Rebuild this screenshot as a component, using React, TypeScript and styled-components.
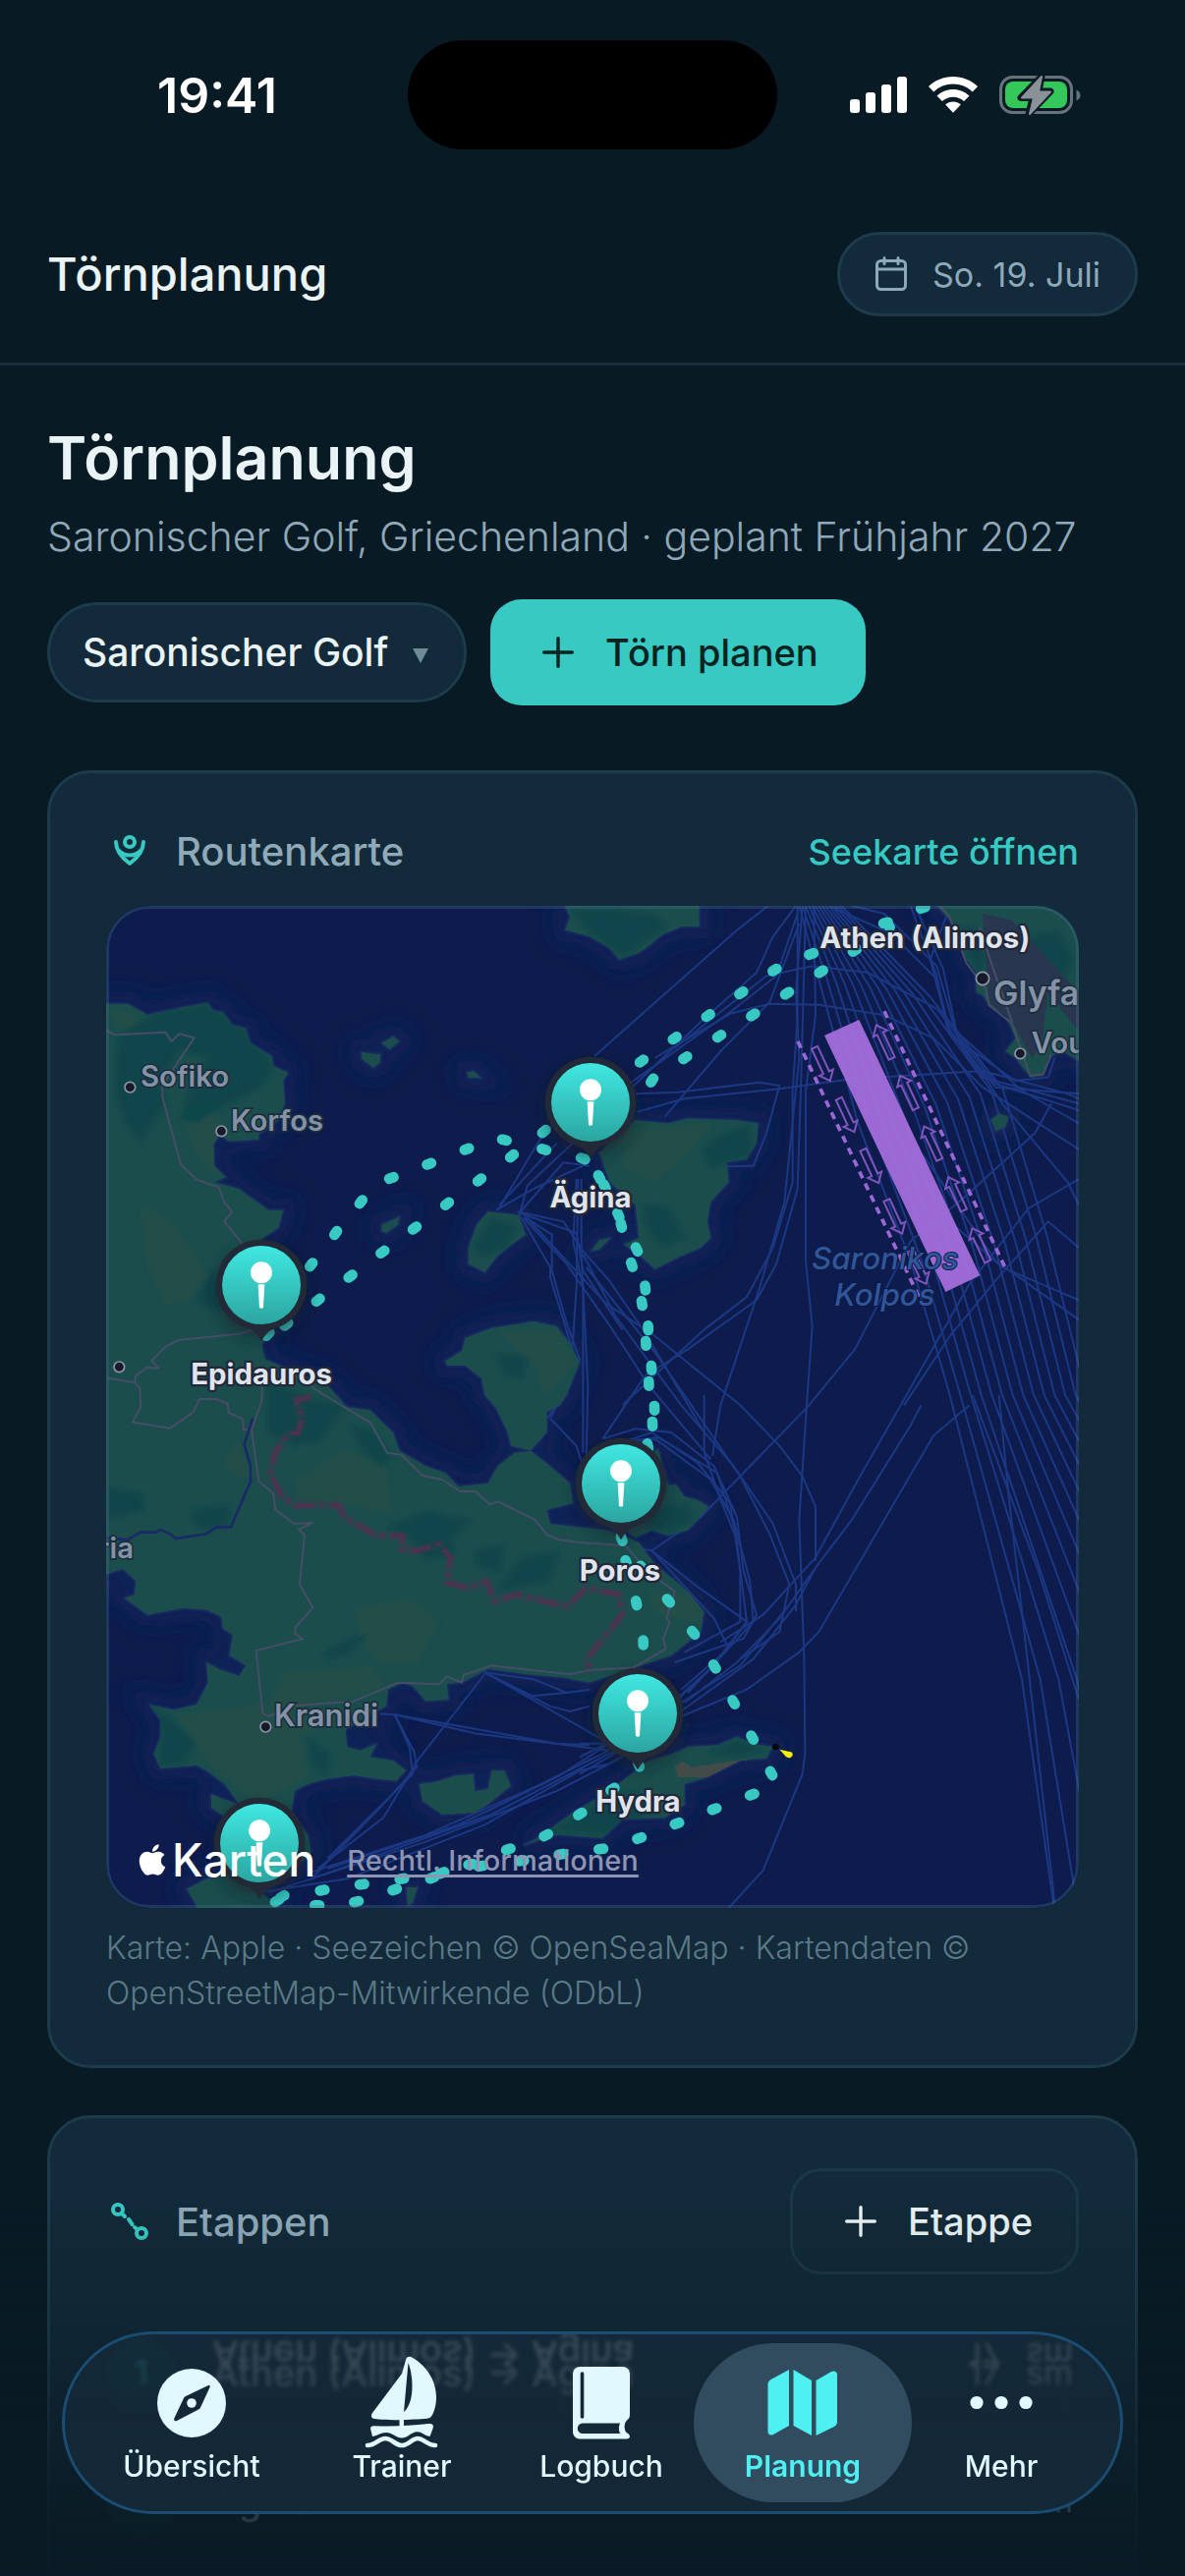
import React from "react";
import styled, { createGlobalStyle, css } from "styled-components";
import { FaApple } from "react-icons/fa";

const color = {
  page: "#081a24",
  card: "#122a39",
  line: "#1e3b4b",
  text: "#eaf3f5",
  muted: "#8fa9b9",
  faint: "#5c7988",
  teal: "#38c9c3",
  tab: "#e0f8ff",
  tabActive: "#4ef0f2",
};

const Global = createGlobalStyle`
  *, *::before, *::after { box-sizing: border-box; }
  body {
    margin: 0;
    background: ${color.page};
    color: ${color.text};
    font-family: Inter, "Noto Sans", sans-serif;
    -webkit-font-smoothing: antialiased;
  }
  button, select { font-family: inherit; margin: 0; }
`;

const Screen = styled.div`
  height: 100vh;
  overflow: hidden;
  display: flex;
  flex-direction: column;
`;

/* ---------- status bar ---------- */

const StatusBar = styled.div`
  flex: none;
  height: 186px;
  padding: 41px 106px 0;
  display: grid;
  grid-template-columns: 1fr 376px 1fr;
  align-items: start;
`;
const Clock = styled.time`
  padding-left: 54px;
  font-size: 50px;
  font-weight: 600;
  line-height: 112px;
  color: #fff;
`;
const Island = styled.div`
  height: 111px;
  border-radius: 56px;
  background: #000;
`;
const StatusIcons = styled.div`
  display: flex;
  justify-content: flex-end;
  align-items: center;
  gap: 22px;
  height: 112px;
  svg { display: block; }
`;

/* ---------- header ---------- */

const Header = styled.header`
  flex: none;
  display: flex;
  align-items: center;
  justify-content: space-between;
  padding: 50px 48px 47px;
  border-bottom: 3px solid #182d39;
`;
const HeaderTitle = styled.span`
  font-size: 47px;
  font-weight: 500;
  line-height: 60px;
`;
const DateChip = styled.button`
  display: flex;
  align-items: center;
  gap: 26px;
  height: 86px;
  padding: 0 35px 0 36px;
  border: 3px solid ${color.line};
  border-radius: 43px;
  background: ${color.card};
  color: ${color.muted};
  font-size: 34px;
  font-weight: 400;
`;

/* ---------- page ---------- */

const Main = styled.main`
  flex: 1;
  min-height: 0;
  overflow-y: auto;
  scrollbar-width: none;
  padding: 54px 48px 200px;
`;
const Title = styled.h1`
  margin: 0;
  font-size: 61px;
  font-weight: 600;
  line-height: 80px;
`;
const Subtitle = styled.p`
  margin: 12px 0 0;
  font-size: 41px;
  font-weight: 300;
  line-height: 56px;
  color: ${color.muted};
`;
const Actions = styled.div`
  display: flex;
  align-items: center;
  gap: 24px;
  margin-top: 36px;
`;
const SelectPill = styled.label`
  display: flex;
  align-items: center;
  gap: 24px;
  height: 102px;
  padding: 0 36px 0 33px;
  border: 3px solid ${color.line};
  border-radius: 51px;
  background: ${color.card};
`;
const RegionSelect = styled.select`
  appearance: none;
  padding: 0;
  border: 0;
  outline: 0;
  background: transparent;
  color: ${color.text};
  font-size: 39px;
  font-weight: 500;
  line-height: 50px;
`;
const Caret = styled.span`
  width: 0;
  height: 0;
  margin-top: 6px;
  border: 8px solid transparent;
  border-top: 15px solid #708b98;
  border-bottom: 0;
`;
const ActionButton = styled.button<{ $primary?: boolean }>`
  display: flex;
  align-items: center;
  gap: 32px;
  height: 108px;
  border-radius: 32px;
  font-size: 38px;
  font-weight: 500;
  ${(p) =>
    p.$primary
      ? css`
          padding: 0 48px 0 53px;
          border: 0;
          background: ${color.teal};
          color: #06231f;
        `
      : css`
          padding: 0 44px 0 53px;
          border: 3px solid #1c3846;
          background: transparent;
          color: ${color.text};
        `}
`;

const Card = styled.section<{ $gap: number }>`
  margin-top: ${(p) => p.$gap}px;
  padding: 51px 57px 50px;
  border: 3px solid ${color.line};
  border-radius: 44px;
  background: ${color.card};
`;
const CardHeader = styled.div<{ $tall?: boolean }>`
  display: flex;
  align-items: center;
  justify-content: space-between;
  min-height: ${(p) => (p.$tall ? 108 : 51)}px;
  margin: ${(p) => (p.$tall ? "0 0 36px" : "3px 0 30px")};
`;
const CardTitle = styled.h2`
  display: flex;
  align-items: center;
  gap: 23px;
  margin: 0;
  font-size: 40px;
  font-weight: 500;
  line-height: 51px;
  color: ${color.muted};
`;
const CardLink = styled.a`
  color: ${color.teal};
  font-size: 36px;
  font-weight: 500;
  text-decoration: none;
`;

const MapFrame = styled.div`
  position: relative;
  aspect-ratio: 33 / 34;
  border-radius: 44px;
  overflow: hidden;
  background: #0d1c4e;
  &::after {
    content: "";
    position: absolute;
    inset: 0;
    border: 3px solid rgba(75, 120, 150, 0.3);
    border-radius: inherit;
    pointer-events: none;
  }
  > svg { display: block; width: 100%; height: 100%; }
`;
const MapCredit = styled.div`
  position: absolute;
  left: 30px;
  bottom: 21px;
  display: flex;
  align-items: center;
  gap: 32px;
`;
const MapBrand = styled.span`
  display: flex;
  align-items: center;
  gap: 3px;
  color: #fff;
  font-size: 46px;
  font-weight: 500;
  line-height: 56px;
  svg { width: 34px; height: 36px; }
`;
const LegalLink = styled.a`
  color: #8d95b2;
  font-size: 29px;
  font-weight: 500;
  text-decoration: underline;
  text-decoration-thickness: 3px;
  text-underline-offset: 4px;
`;
const Caption = styled.p`
  margin: 18px 0 0;
  font-size: 32px;
  font-weight: 300;
  line-height: 46px;
  color: ${color.faint};
`;

const LegList = styled.ol`
  margin: 0;
  padding: 0;
  list-style: none;
`;
const Leg = styled.li`
  display: flex;
  align-items: center;
  gap: 36px;
  height: 130px;
  border-bottom: 3px solid ${color.line};
`;
const LegNumber = styled.span`
  display: grid;
  place-items: center;
  width: 72px;
  height: 72px;
  border-radius: 50%;
  background: #0f3e46;
  color: ${color.teal};
  font-size: 34px;
  font-weight: 600;
`;
const LegName = styled.span<{ $mirrored?: boolean }>`
  flex: 1;
  font-size: 38px;
  line-height: 40px;
  font-weight: 500;
  ${(p) => p.$mirrored && css`-webkit-box-reflect: above -22px;`}
`;
const LegDistance = styled.span<{ $mirrored?: boolean }>`
  display: flex;
  gap: 26px;
  padding-right: 6px;
  font-size: 34px;
  line-height: 40px;
  ${(p) => p.$mirrored && css`-webkit-box-reflect: above -22px;`}
`;

/* ---------- tab bar ---------- */

const Fade = styled.div`
  position: fixed;
  inset: auto 0 0;
  height: 380px;
  pointer-events: none;
  background: linear-gradient(
    rgba(10, 25, 35, 0) 0%,
    rgba(10, 25, 35, 0.18) 30%,
    rgba(10, 25, 35, 0.45) 50%,
    rgba(10, 26, 35, 0.86) 82%,
    rgba(10, 26, 37, 0.93) 100%
  );
`;
const TabBar = styled.nav`
  position: fixed;
  inset: auto 63px 63px;
  height: 186px;
  display: grid;
  grid-template-columns: 240fr 188fr 218fr 192fr 212fr;
  padding: 9px 15px 9px 9px;
  border: 3px solid #1b4c72;
  border-radius: 93px;
  background: linear-gradient(rgba(21, 42, 58, 0.76) 45%, rgba(20, 41, 56, 0.98) 65%);
  backdrop-filter: blur(2px);
`;
const Tab = styled.button<{ $active?: boolean }>`
  display: flex;
  flex-direction: column;
  align-items: center;
  justify-content: flex-start;
  height: 162px;
  margin: 0 ${(p) => (p.$active ? -15 : 0)}px;
  padding: 11px 0 0;
  border: 0;
  border-radius: 81px;
  background: ${(p) => (p.$active ? "#324c5f" : "transparent")};
  color: ${(p) => (p.$active ? color.tabActive : color.tab)};
  font-size: 30px;
  font-weight: ${(p) => (p.$active ? 600 : 500)};
  line-height: 36px;
  svg { display: block; width: 96px; height: 96px; }
`;

/* ---------- icons ---------- */

const PlusIcon = () => (
  <svg width="32" height="32" viewBox="0 0 32 32" fill="none" stroke="currentColor" strokeWidth="3.4" strokeLinecap="round">
    <path d="M16 1.7v28.6M1.7 16h28.6" />
  </svg>
);

const CalendarIcon = () => (
  <svg width="32" height="36" viewBox="0 0 32 36" fill="none" stroke="currentColor" strokeWidth="3" strokeLinecap="round">
    <rect x="1.5" y="4.5" width="29" height="29" rx="4" />
    <path d="M1.5 13h29M9 1.5v6M23 1.5v6" />
  </svg>
);

const RoutePinIcon = () => (
  <svg width="48" height="48" viewBox="0 0 48 48" fill="none" stroke={color.teal} strokeWidth="4" strokeLinecap="round" strokeLinejoin="round">
    <circle cx="24" cy="14" r="5" />
    <path d="M10 14c0 9 6 16 14 22 8-6 14-13 14-22" />
    <path d="M13 23c6 6 16 6 22 0" />
  </svg>
);

const LegsIcon = () => (
  <svg width="48" height="48" viewBox="0 0 48 48" fill="none" stroke={color.teal} strokeWidth="4" strokeLinecap="round">
    <circle cx="12" cy="12" r="5" />
    <circle cx="36" cy="36" r="5" />
    <path d="M16 16l3 3M23 22l3.500 5M29 30l3 2.500" />
  </svg>
);

const SignalIcon = () => (
  <svg width="58" height="38" viewBox="0 0 58 38" fill="#fff">
    <rect x="0" y="23" width="10" height="14" rx="3" />
    <rect x="16" y="16" width="10" height="21" rx="3" />
    <rect x="32" y="8" width="10" height="29" rx="3" />
    <rect x="48" y="0" width="10" height="37" rx="3" />
  </svg>
);

const WifiIcon = () => (
  <svg width="50" height="38" viewBox="0 0 50 38" fill="#fff">
    <path d="M25 0C15.300 0 6.500 3.800 0 10l5.300 5.500C10.400 10.600 17.400 7.600 25 7.600s14.600 3 19.700 7.900L50 10C43.500 3.800 34.700 0 25 0z" />
    <path d="M25 13c-6.400 0-12.200 2.500-16.500 6.600l5.400 5.500c2.900-2.700 6.800-4.400 11.100-4.400s8.200 1.700 11.100 4.400l5.400-5.500C37.200 15.500 31.400 13 25 13z" />
    <path d="M25 25.500c-3 0-5.800 1.200-7.800 3L25 36.800l7.800-8.300c-2-1.800-4.800-3-7.800-3z" />
  </svg>
);

const BatteryIcon = () => (
  <svg width="83" height="42" viewBox="0 0 83 42">
    <rect x="1.500" y="2.500" width="72" height="36" rx="12" fill="none" stroke="#67737a" strokeWidth="3" />
    <rect x="6" y="7" width="63" height="27" rx="8" fill="#34c85a" />
    <path d="M78.500 15.500c2.500 1 4 3 4 5.500s-1.500 4.500-4 5.500z" fill="#67737a" />
    <path d="M43 2L22 23.500h12L30 40l22-23H40z" fill="#8a9197" stroke={color.page} strokeWidth="7" strokeLinejoin="round" />
    <path d="M43 2L23 23.500h12L31 40l21-22.500H40z" fill="#8a9197" stroke="#8a9197" strokeWidth="2" strokeLinejoin="round" />
  </svg>
);

const CompassIcon = () => (
  <svg viewBox="0 0 96 96" fill="currentColor">
    <path
      fillRule="evenodd"
      d="M48 15a35 35 0 1 0 0 70 35 35 0 0 0 0-70zm17 17c1.500-.7 2 .5 1.500 2L57 54.500a4 4 0 0 1-2 2L33 68c-2 .8-3.500-.5-2.700-2.500L40 45a4 4 0 0 1 2-2z"
    />
    <circle cx="48" cy="50" r="4.800" />
  </svg>
);

const SailIcon = () => (
  <svg viewBox="0 0 96 96" fill="currentColor">
    <path d="M52 6c1-4 4-4 7-2 14 8 24 23 24 40 0 8-2 14-4 18-1.500 3-4 4-8 4-14 1-38 2-51 0-3-.5-4-3-2-6l30-40z" />
    <path d="M54.500 9c5 12 7 40-4.500 50z" fill="#142a38" />
    <path d="M45.500 64h4.500v12h-4.500z" />
    <path d="M16 76c0-2 1.500-3 4-2.800 17 .8 37 0 55-2.200 5-.6 5.500 2 4.500 5l-3 8c-6-1-9-6-15-4.500-5 1.500-8 6-13.500 6S38 80 32 80s-8 3-14 4z" />
    <path d="M13 93c9 0 11-7 18-7s10 7 17 7 10-7 16-7 10 7 18 7" fill="none" stroke="currentColor" strokeWidth="4.600" strokeLinecap="round" />
  </svg>
);

const BookIcon = () => (
  <svg viewBox="0 0 96 96" fill="currentColor">
    <path d="M26 13h44a7 7 0 0 1 7 7v42c0 3-1.500 4.500-3.500 6-2.500 3-2.500 9 0 12 2 1 3.500 2.500 3.500 4s-1.500 2.500-3 2.500H26a7 7 0 0 1-7-7V20a7 7 0 0 1 7-7z" />
    <path d="M28.500 20v44" stroke="#142a38" strokeWidth="3.600" strokeLinecap="round" />
    <path d="M29 70.500h38c-1.500 3-1.500 7 0 10.500H29a5.200 5.200 0 0 1 0-10.500z" fill="#142a38" />
  </svg>
);

const MapIcon = () => (
  <svg viewBox="0 0 96 96" fill="currentColor">
    <path d="M34 16v57l-16 9c-3 1.500-5.500 0-5.500-3V31c0-2 1-4 3-5z" />
    <path d="M38.500 16L57 27v56L38.500 73z" />
    <path d="M61.500 27L77 18c3-1.500 6 0 6 3v48c0 2-1 4-3 5l-18.500 9z" />
  </svg>
);

const MoreIcon = () => (
  <svg viewBox="0 0 96 96" fill="currentColor">
    <circle cx="23" cy="49.500" r="6.600" />
    <circle cx="48" cy="49.500" r="6.600" />
    <circle cx="73" cy="49.500" r="6.600" />
  </svg>
);

/* ---------- nautical chart ---------- */

const SHEET_EDGE = 1530;
const southY = (y: number) => (y > SHEET_EDGE ? Math.round(SHEET_EDGE + (y - SHEET_EDGE) * 1.033) : y);
const project = (points: string) =>
  points
    .split(" ")
    .map((pair) => {
      const [x, y] = pair.split(",").map(Number);
      return `${x},${southY(y)}`;
    })
    .join(" ");

const land = [
  "24,335 90,335 150,368 215,355 260,345 335,332 350,355 380,360 410,400 450,410 465,455 530,495 535,525 580,545 565,570 570,640 550,690 490,735 490,750 400,755 370,735 352,765 355,830 390,865 355,880 430,900 520,965 565,965 550,1020 490,1060 480,1150 540,1260 500,1380 510,1420 600,1460 700,1500 760,1565 830,1575 900,1640 920,1695 1000,1740 1060,1760 1100,1800 1190,1790 1220,1740 1270,1700 1320,1695 1380,1740 1440,1790 1450,1850 1370,1870 1380,1910 1470,1920 1560,1930 1650,1965 1700,2030 1770,2085 1800,2110 1850,2170 1840,2230 1750,2300 1640,2335 1500,2380 1420,2365 1300,2355 1190,2340 1110,2380 1065,2385 1070,2430 1000,2435 960,2390 930,2380 885,2400 880,2450 820,2480 755,2520 760,2570 800,2580 850,2560 830,2600 900,2610 940,2640 910,2670 850,2665 780,2655 700,2665 640,2680 600,2700 590,2760 640,2830 650,2880 600,2930 500,3000 560,3060 560,3096 320,3096 300,3040 270,2990 330,2960 400,2950 440,2850 440,2800 390,2780 345,2750 345,2710 400,2730 430,2740 385,2680 330,2640 300,2625 190,2635 170,2590 190,2540 190,2490 155,2445 230,2460 300,2445 335,2380 330,2320 370,2340 430,2360 450,2330 400,2300 410,2240 380,2220 375,2185 330,2165 260,2160 150,2180 80,2130 110,2120 115,2080 75,2045 24,2060",
  "1425,36 1440,70 1425,110 1500,130 1560,165 1590,200 1650,180 1680,160 1720,125 1780,100 1835,100 1835,36",
  "1530,790 1640,690 1740,700 1800,685 1950,690 2015,700 2010,760 1980,810 1920,820 1925,880 1870,940 1860,1000 1870,1050 1840,1080 1770,1110 1700,1145 1660,1110 1605,1070 1650,1050 1640,950 1560,880",
  "1190,970 1285,980 1305,1040 1250,1080 1215,1110 1180,1155 1130,1130 1130,1080 1155,1010",
  "865,1010 920,985 915,1010 880,1035 865,1030",
  "865,455 900,435 920,450 890,475",
  "803,483 862,490 860,515 840,530 805,505",
  "1125,545 1145,540 1170,562 1130,560",
  "1505,1090 1530,1055 1565,1050 1530,1085",
  "1060,1425 1110,1395 1120,1355 1200,1325 1330,1305 1400,1320 1440,1370 1470,1430 1430,1530 1410,1560 1370,1580 1370,1640 1320,1695 1260,1680 1250,1640 1215,1570 1180,1530 1170,1480 1120,1440 1065,1440",
  "1560,1900 1640,1720 1710,1690 1740,1795 1765,1795 1790,1830 1830,1840 1865,1860 1830,1900 1800,1930 1740,1945 1690,1930 1640,1950",
  "980,2680 1040,2670 1090,2655 1145,2650 1150,2700 1190,2695 1200,2640 1240,2640 1260,2685 1190,2740 1150,2765 1050,2770 990,2730",
  "1300,2860 1340,2840 1440,2770 1560,2700 1640,2640 1680,2610 1740,2595 1800,2570 1890,2565 1950,2540 2000,2560 2060,2570 2040,2605 1960,2610 1860,2660 1790,2680 1790,2740 1730,2780 1600,2785 1540,2840 1400,2830",
  "2560,36 2600,80 2650,200 2680,240 2680,300 2700,310 2720,340 2770,370 2800,440 2770,480 2800,500 2830,540 2850,560 2885,555 2900,500 2940,480 2960,490 2994,510 2994,36",
  "2725,690 2750,670 2780,680 2770,710 2740,725",
  "940,2985 975,2985 960,3030 945,3040",
].map(project);

const forest = [
  "60,430 200,350 330,335 450,410 540,530 500,590 400,640 300,700 250,690 290,560 340,500 250,480 190,580 210,640 130,760 80,700 50,600",
  "1440,50 1540,40 1700,60 1740,100 1600,195 1500,120",
  "1840,780 1890,740 1990,700 2000,800 1920,820 1870,840",
  "1660,950 1740,950 1790,1050 1720,1080 1670,1010",
  "1140,1080 1200,990 1280,1010 1250,1080 1170,1110",
  "350,1150 420,1180 400,1270 330,1260 290,1240",
  "515,1480 640,1540 760,1560 675,1670 600,1680 515,1640",
  "765,1610 850,1640 900,1720 860,1740 800,1690",
  "280,1870 400,1850 400,1910 340,1930 290,1910",
  "24,1800 140,1820 140,1870 24,1900",
  "880,1920 1000,1870 1140,1900 1080,1950 1090,2000 1000,2020 960,1960",
  "1150,1990 1240,1970 1230,2060 1150,2030",
  "1210,2110 1290,2010 1410,1990 1380,2080 1290,2100",
  "680,2300 760,2250 830,2235 760,2300 700,2310",
  "160,2445 240,2500 300,2560 260,2620 180,2630 195,2520",
  "630,2540 710,2590 700,2660 650,2620",
  "1640,1880 1740,1860 1800,1850 1820,1900 1740,1940 1680,1920",
  "1380,2820 1560,2710 1640,2700 1680,2770 1560,2830",
  "1860,2590 1950,2545 2040,2580 1960,2600",
  "2600,100 2690,100 2710,220 2690,250",
  "2840,130 2930,110 2980,200 2950,260 2880,230",
  "1210,1400 1310,1410 1300,1480 1240,1470",
].map(project);

const scrub = [
  "130,950 230,1000 330,1160 280,1240 200,1260 140,1100",
  "250,650 340,640 400,740 360,860 290,780",
  "24,350 110,360 130,410 60,410",
  "600,1780 760,1690 880,1750 900,1880 740,1850 600,1840",
  "420,1660 480,1760 440,1780 380,1740",
  "780,2160 960,2130 1040,2200 980,2320 860,2330 800,2260",
  "560,2350 840,2330 880,2400 600,2460 520,2440",
  "240,2480 500,2440 700,2500 620,2540 640,2660 480,2740 340,2620",
  "1600,720 1880,700 1800,790 1700,880 1600,830",
  "1680,2110 1830,2120 1840,2200 1700,2180",
  "1220,1330 1400,1330 1460,1430 1360,1540 1330,1440",
].map(project);

const roads = [
  "24,415 48,430 205,422 224,450 247,427 293,439 195,585 196,620 252,825 300,872 368,895 385,942 408,970 385,1000 450,1080",
  "470,1330 430,1343 245,1362 208,1380 163,1425 184,1448 150,1445 114,1472 112,1492 30,1478",
  "112,1492 127,1510 130,1565 105,1610 220,1628 290,1580 310,1542 360,1542 395,1556 398,1582 442,1602 443,1633 468,1633 500,1545 500,1500",
  "468,1633 490,1785 535,1820 540,1868 598,1910 655,1908 612,1928 630,1942 615,2090 655,2158 603,2215 600,2235 625,2250 482,2285 502,2470 520,2480 600,2448 780,2435 915,2380 1040,2385 1065,2362 1110,2380 1115,2358 1200,2330 1440,2356 1500,2343 1635,2335 1732,2280 1725,2250 1745,2200 1735,2190 1760,2110 1730,2090 1660,2030 1610,1975 1460,1965 1405,1957 1370,1942 1332,1898 1220,1845 1195,1853 1152,1815 1105,1815 1050,1780 990,1768 925,1706 882,1700 832,1612 690,1530 600,1470",
  "2570,36 2600,70 2650,210 2710,290 2720,340 2790,395 2845,555 2885,550 2910,490",
  "2690,100 2740,250 2790,390",
].map(project);

const river = project(
  "24,1952 90,1958 128,1936 175,1936 190,1928 220,1940 236,1954 330,1940 362,1920 405,1920 465,1785 465,1740 446,1675 472,1598"
);

const district = project(
  "650,1535 605,1545 622,1600 610,1640 575,1650 540,1700 524,1760 560,1830 600,1856 735,1856 750,1890 850,1945 930,1945 925,1985 975,1990 1040,1970 1075,2010 1065,2085 1130,2100 1185,2080 1210,2140 1275,2120 1430,2155 1490,2100 1590,2120 1600,2180 1500,2300 1492,2350"
);

const ferries = [
  "2045,36 1950,110 1515,495",
  "2130,36 2060,130 2010,240 1850,380 1630,590",
  "2135,60 2070,250 1930,360 1620,580",
  "2140,90 2050,330 1900,480 1730,680",
  "2135,36 2135,380 2120,600 2120,880 2060,1080 1980,1230 1850,1330 1600,1560",
  "2160,36 2145,600 2135,900 2070,1130 2010,1240 1800,1390 1670,1470 1540,1660",
  "2185,36 2190,370 2160,600 2160,1120 2180,1320 2165,1530 2140,1900 2155,2300 2158,2590 2150,2650 2030,2935 1925,3046",
  "2150,36 2130,300 2140,500 2095,940 2020,1200 1900,1560 1875,1710",
  "1640,610 1770,605 2020,575 2080,585 2040,730 2000,830 1920,832",
  "1645,665 1790,625 2080,595 2300,565 2700,540 2960,610 2994,625",
  "1700,500 1930,365 2050,335 2200,338 2400,370 2550,440 2700,590 2994,780",
  "1760,470 2040,250 2180,220 2350,240 2560,350 2740,580 2994,660",
  "2230,36 2420,120 2560,260 2600,420 2740,590 2994,610",
  "2300,36 2400,60 2560,220 2620,430 2760,640 2960,880 2994,950",
  "2480,36 2560,250 2590,400 2700,560 2994,640",
  "2500,50 2580,230 2620,420 2820,600 2994,700",
  "2600,40 2540,200 2600,430 2800,570 2900,560 2920,500",
  "2994,1080 2900,1000 2740,1180 2600,1350 2460,1560",
  "2994,1240 2760,1140 2600,1000 2420,700",
  "2994,1300 2740,1120 2520,800",
  "2994,870 2840,960 2660,1190 2450,1560 2320,1780 2190,2010 2030,2180 1900,2260",
  "2660,1560 2550,1650 2200,2230 2140,2290 1980,2400 1780,2480",
  "2512,1560 2480,1620 2300,1900 2190,2040 2080,2190 1950,2320 1790,2440",
  "2910,640 2860,730 2640,930 2480,1060 2310,1390 2170,1560 1840,1890 1690,1990 1610,1980",
  "1220,965 1360,730 1560,560",
  "1225,950 1400,760",
  "1215,965 1330,900 1480,830",
  "1285,985 1310,890 1470,740",
  "1285,975 1420,820 1500,830",
  "1290,985 1380,1140 1380,1170 1450,1400 1470,1430",
  "1300,985 1385,1040 1385,1150 1430,1310 1470,1420 1380,1600 1460,1680 1480,1740",
  "1290,975 1460,1035 1480,1150 1600,1330",
  "1280,970 1420,1000 1480,1090 1560,1180 1670,1340 1850,1640",
  "1460,870 1450,1060 1480,1200 1480,1700",
  "1475,870 1475,1100 1495,1500 1490,1720",
  "1465,870 1460,1200 1440,1500 1370,1600",
  "1300,990 1430,1130 1570,1330 1680,1500 1870,1720",
  "1310,990 1550,1250 1700,1350 1960,1560 2080,1680 2150,1770 2190,1860 2190,2020",
  "1480,1100 1580,1290 1780,1560 1940,1740 2060,1910 2130,2090 2130,2170",
  "1490,1140 1700,1400 1960,1770 2050,1940 2110,2090 2080,2230 1960,2310",
  "1540,1660 1640,1630 1750,1640 1880,1740 1950,1890 1970,2050 2010,2180 1970,2250 1760,2320",
  "1540,1690 1690,1640 1830,1730 1930,1850 1960,2050 1960,2200 1790,2290",
  "1550,1680 1700,1660 1870,1780 1940,1900 1990,2080 2000,2200 1800,2410",
  "1580,1670 1710,1655 1890,1760 1945,1930 1980,2200 1900,2300 1780,2400",
  "1690,1990 1820,2090 1980,2200 1880,2330 1740,2450",
  "1690,1990 1880,2190 1920,2270",
  "1850,1530 1850,1700 1900,1840 1955,1970",
  "1180,2350 1330,2370 1430,2410 1500,2400",
  "1180,2350 1325,2420 1430,2410",
  "1180,2350 1560,2560",
  "1180,2350 1380,2450 1440,2465 1500,2450",
  "1180,2355 975,2610 870,2780 670,2930",
  "860,2472 905,2475 1400,2560 1500,2565",
  "905,2475 1150,2530 1560,2580",
  "905,2475 950,2570 960,2650 700,2900",
  "905,2475 965,2585 972,2630 870,2740 650,2960",
  "650,2960 1200,2770 1560,2590 1650,2560",
  "650,2940 1000,2830 1330,2690 1560,2580",
  "520,3000 1000,2850 1400,2700 1600,2600",
  "700,2930 1100,2800 1400,2660 1560,2560 1780,2480",
  "510,2998 760,2960 1180,2800 1470,2640 1560,2620",
  "1470,2560 1640,2560 1790,2410 1880,2330",
  "1470,2600 1680,2500 1960,2330 2110,2150",
  "1470,2650 1700,2520 2000,2310 2130,2150 2190,2040",
  "2750,1530 2780,1830 2860,2510 2920,3030",
  "2670,1530 2870,2050 2994,2430",
].map(project);

const ferryFan = Array.from({ length: 14 }, (_, i) => {
  const north = `${2140 + i * 10},36 ${2200 + i * 26},${260 + i * 4}`;
  const middle = `${2320 + i * 34},${700 - i * 8} ${2480 + i * 32},${1120 - i * 6}`;
  const south = `${2600 + i * 32},1530 ${2820 + i * 56},2370 ${2920 + i * 72},3060`;
  return project(`${north} ${middle} ${south}`);
});

type Dot = [number, number, number];
const routeDots: Dot[] = [
  [1361, 725, -40], [1263, 800, -40], [1164, 873, -38], [1065, 946, -38], [966, 1020, -36], [868, 1093, -36],
  [770, 1167, -36], [671, 1240, -38], [574, 1314, -38], [518, 1344, -45],
  [1480, 808, 20], [1361, 780, 15], [1240, 751, 15], [1125, 779, -20], [1010, 824, -20], [895, 867, -20],
  [802, 940, -52], [725, 1035, -55], [650, 1132, -52],
  [1659, 510, -35], [1760, 440, -35], [1862, 371, -35], [1963, 302, -35], [2065, 232, -32], [2177, 183, -20],
  [1691, 569, -55], [1792, 500, -33], [1896, 434, -33], [1999, 369, -33], [2103, 303, -33], [2207, 237, -33],
  [2310, 172, -33], [2404, 88, -15], [2412, 96, 45], [2518, 42, -20],
  [1530, 865, 62], [1546, 892, 62], [1588, 980, 65], [1597, 1012, 75], [1644, 1085, 65], [1629, 1132, 72],
  [1670, 1203, 84], [1660, 1250, 80], [1679, 1325, 88], [1672, 1372, 86], [1689, 1447, 86], [1681, 1495, 88],
  [1698, 1569, 88], [1692, 1615, 88], [1678, 1680, 75],
  [1598, 1955, 70], [1612, 2025, 70], [1660, 2040, 50], [1643, 2145, 78], [1741, 2138, 50], [1664, 2262, 88], [1817, 2233, 52],
  [1882, 2333, 58], [1940, 2438, 60], [1997, 2543, 60], [2055, 2648, 62], [1996, 2711, -20], [1881, 2754, -20],
  [1767, 2796, -20], [1652, 2840, -20], [1535, 2872, -8], [1650, 2622, 70], [1570, 2695, -32], [1471, 2768, -32],
  [1367, 2831, -28], [1252, 2873, -20], [1413, 2887, -8], [1293, 2907, -8], [1137, 2917, -8], [1168, 2922, -8],
  [1050, 2942, -22], [1020, 2957, -22], [927, 2960, -10], [905, 2992, -18], [805, 2976, -8], [788, 3028, -14],
  [684, 2994, -10], [668, 3038, 0], [562, 3012, -30], [546, 3025, -30],
];

const pins: [number, number][] = [[1503, 636], [498, 1194], [1596, 1791], [1647, 2471], [492, 2854]];

const towns: { name: string; x: number; y: number; size: number; anchor?: "end" }[] = [
  { name: "Sofiko", x: 129, y: 588, size: 88 },
  { name: "Korfos", x: 405, y: 722, size: 88 },
  { name: "Kranidi", x: 537, y: 2508, size: 93 },
  { name: "Iria", x: 108, y: 2012, size: 88, anchor: "end" },
  { name: "Glyfada", x: 2733, y: 340, size: 102 },
  { name: "Voula", x: 2849, y: 486, size: 88 },
];

const townMarks: Dot[] = [[97, 590, 16], [376, 724, 16], [64, 1444, 16], [511, 2511, 16], [2700, 258, 20], [2815, 487, 16]];

const harbours = [
  { name: "Athen (Alimos)", x: 2524, y: 165 },
  { name: "Ägina", x: 1503, y: 957 },
  { name: "Epidauros", x: 498, y: 1498 },
  { name: "Poros", x: 1593, y: 2080 },
  { name: "Hydra", x: 1648, y: 2762 },
];

const arrowsSouth = [[2210, 518], [2284, 674], [2358, 830], [2430, 984], [2503, 1138]];
const arrowsNorth = [[2400, 453], [2473, 607], [2546, 762], [2620, 917], [2693, 1073]];
const arrow = "M-10 54V-30H-23L0-58 23-30H10V54z";

const Lane = styled.polyline`
  fill: none;
  stroke: #1c3883;
  stroke-width: 6;
`;
const Road = styled.polyline`
  fill: none;
  stroke: #464d66;
  stroke-width: 6;
  stroke-linejoin: round;
`;
const TownLabel = styled.text`
  fill: #8592a6;
  font-weight: 600;
  stroke: #1b2e3d;
  stroke-width: 10;
  paint-order: stroke;
`;
const SeaLabel = styled.text`
  fill: #305699;
  font-size: 94px;
  font-weight: 500;
  font-style: italic;
  stroke: #0c1a45;
  stroke-width: 6;
  paint-order: stroke;
`;
const HarbourLabel = styled.text`
  fill: #e0e4ec;
  font-size: 88px;
  font-weight: 700;
  text-anchor: middle;
  stroke: #20283a;
  stroke-width: 14;
  stroke-linejoin: round;
  paint-order: stroke;
`;

const RouteChart = () => (
  <svg viewBox="24 36 2970 3060" role="img" aria-label="Routenkarte Saronischer Golf">
    <defs>
      <linearGradient id="pin" x1="0" y1="0" x2="0" y2="1">
        <stop offset="0" stopColor="#40e8e1" />
        <stop offset="1" stopColor="#2ba5a1" />
      </linearGradient>
      <filter id="shallows" x="-20%" y="-20%" width="140%" height="140%">
        <feGaussianBlur stdDeviation="34" />
      </filter>
      <filter id="growth" x="-20%" y="-20%" width="140%" height="140%">
        <feGaussianBlur stdDeviation="7" />
      </filter>
      <filter id="shade" x="-50%" y="-50%" width="200%" height="200%">
        <feGaussianBlur stdDeviation="22" />
      </filter>
      <clipPath id="shore">
        {land.map((p) => <polygon key={p} points={p} />)}
      </clipPath>
    </defs>
    <rect x="24" y="36" width="2970" height="3060" fill="#0d1c4c" />
    <g fill="#0e2356" stroke="#0e2356" strokeWidth="70" filter="url(#shallows)">
      {land.map((p) => <polygon key={p} points={p} />)}
    </g>
    <g fill="#17275f" stroke="#17275f" strokeWidth="12" strokeLinejoin="round">
      {land.map((p) => <polygon key={p} points={p} />)}
    </g>
    <g>{[...ferries, ...ferryFan].map((p) => <Lane key={p} points={p} />)}</g>
    <g fill="#1b4d4d">{land.map((p) => <polygon key={p} points={p} />)}</g>
    <g clipPath="url(#shore)">
      <g filter="url(#growth)">
        {scrub.map((p) => <polygon key={p} points={p} fill="#244e48" />)}
        {forest.map((p) => <polygon key={p} points={p} fill="#0c464b" fillOpacity="0.85" />)}
      </g>
      <polygon points="2700,60 2790,80 2994,300 2994,420 2900,300 2880,460 2850,500 2790,390 2720,330" fill="#29364f" />
      <polygon points={project("1760,2630 1780,2610 1810,2630 1990,2605 1860,2660 1770,2660")} fill="#424b48" />
    </g>
    {roads.map((p) => <Road key={p} points={p} />)}
    <polyline points={river} fill="none" stroke="#182b66" strokeWidth="8" />
    <g fill="none" strokeLinejoin="round">
      <polyline points={district} stroke="#5a2e52" strokeOpacity="0.2" strokeWidth="30" />
      <polyline points={district} stroke="#4b3350" strokeWidth="14" strokeDasharray="62 18 12 18" />
    </g>

    <polygon points="2217,432 2323,384 2692,1165 2587,1215" fill="#a870e0" fillOpacity="0.92" />
    <g fill="none" stroke="#9b66d6" strokeWidth="11" strokeDasharray="22 18">
      <path d="M2136 450L2515 1250" />
      <path d="M2400 358L2767 1137" />
    </g>
    <g fill="none" stroke="#7f55bd" strokeWidth="6">
      {arrowsSouth.map(([x, y]) => <path key={y} d={arrow} transform={`translate(${x} ${y}) rotate(155)`} />)}
      {arrowsNorth.map(([x, y]) => <path key={y} d={arrow} transform={`translate(${x} ${y}) rotate(-25)`} />)}
    </g>
    <path d="M2080 2612l35 8c8 4 6 14-2 17-8 2-14-2-18-8z" fill="#f5f000" />
    <circle cx="2068" cy="2604" r="10" fill="#05080c" />

    {townMarks.map(([x, y, r]) => <circle key={y} cx={x} cy={southY(y)} r={r} fill="#171b29" stroke="#8e94a8" strokeWidth="5" />)}
    {towns.map((t) => (
      <TownLabel key={t.name} x={t.x} y={southY(t.y)} fontSize={t.size} textAnchor={t.anchor}>{t.name}</TownLabel>
    ))}
    <SeaLabel x="2178" y="1145">Saronikos</SeaLabel>
    <SeaLabel x="2248" y="1258">Kolpos</SeaLabel>

    <g stroke={color.teal} strokeWidth="32" strokeLinecap="round">
      {routeDots.map(([x, y, a]) => <path key={`${x}-${y}`} d="M-7 0H7" transform={`translate(${x} ${southY(y)}) rotate(${a})`} />)}
    </g>

    {pins.map(([x, y]) => (
      <g key={y} transform={`translate(${x} ${southY(y)})`}>
        <circle cy="24" r="140" fill="#141c28" fillOpacity="0.55" filter="url(#shade)" />
        <path d="M-60 122Q-15 138 0 172 15 138 60 122z" fill="#222937" />
        <circle r="139" fill="#222937" />
        <circle r="120" fill="url(#pin)" />
        <circle cy="-38" r="33" fill="#fff" />
        <path d="M-10-2H10L6 69q-6 5-12 0z" fill="#fff" />
      </g>
    ))}
    {harbours.map((h) => <HarbourLabel key={h.name} x={h.x} y={southY(h.y)}>{h.name}</HarbourLabel>)}
  </svg>
);

/* ---------- screen ---------- */

const legs = [
  { name: "Athen (Alimos) → Ägina", distance: 17 },
  { name: "Ägina → Poros", distance: 22 },
];

const tabs = [
  { label: "Übersicht", icon: <CompassIcon /> },
  { label: "Trainer", icon: <SailIcon /> },
  { label: "Logbuch", icon: <BookIcon /> },
  { label: "Planung", icon: <MapIcon />, active: true },
  { label: "Mehr", icon: <MoreIcon /> },
];

export default function App() {
  return (
    <Screen>
      <Global />
      <StatusBar>
        <Clock>19:41</Clock>
        <Island />
        <StatusIcons>
          <SignalIcon />
          <WifiIcon />
          <BatteryIcon />
        </StatusIcons>
      </StatusBar>

      <Header>
        <HeaderTitle>Törnplanung</HeaderTitle>
        <DateChip type="button">
          <CalendarIcon />
          So. 19. Juli
        </DateChip>
      </Header>

      <Main>
        <Title>Törnplanung</Title>
        <Subtitle>Saronischer Golf, Griechenland · geplant Frühjahr 2027</Subtitle>
        <Actions>
          <SelectPill>
            <RegionSelect aria-label="Revier" defaultValue="saronisch">
              <option value="saronisch">Saronischer Golf</option>
            </RegionSelect>
            <Caret />
          </SelectPill>
          <ActionButton type="button" $primary>
            <PlusIcon />
            Törn planen
          </ActionButton>
        </Actions>

        <Card $gap={66}>
          <CardHeader>
            <CardTitle>
              <RoutePinIcon />
              Routenkarte
            </CardTitle>
            <CardLink href="#seekarte">Seekarte öffnen</CardLink>
          </CardHeader>
          <MapFrame>
            <RouteChart />
            <MapCredit>
              <MapBrand>
                <FaApple />
                Karten
              </MapBrand>
              <LegalLink href="#rechtliches">Rechtl. Informationen</LegalLink>
            </MapCredit>
          </MapFrame>
          <Caption>
            Karte: Apple · Seezeichen © OpenSeaMap · Kartendaten © OpenStreetMap-Mitwirkende (ODbL)
          </Caption>
        </Card>

        <Card $gap={48}>
          <CardHeader $tall>
            <CardTitle>
              <LegsIcon />
              Etappen
            </CardTitle>
            <ActionButton type="button">
              <PlusIcon />
              Etappe
            </ActionButton>
          </CardHeader>
          <LegList>
            {legs.map((leg, i) => (
              <Leg key={leg.name}>
                <LegNumber>{i + 1}</LegNumber>
                <LegName $mirrored={i === 0}>{leg.name}</LegName>
                <LegDistance $mirrored={i === 0}>
                  <span>{leg.distance}</span>
                  <span>sm</span>
                </LegDistance>
              </Leg>
            ))}
          </LegList>
        </Card>
      </Main>

      <Fade />
      <TabBar>
        {tabs.map((tab) => (
          <Tab key={tab.label} type="button" $active={tab.active}>
            {tab.icon}
            {tab.label}
          </Tab>
        ))}
      </TabBar>
    </Screen>
  );
}
